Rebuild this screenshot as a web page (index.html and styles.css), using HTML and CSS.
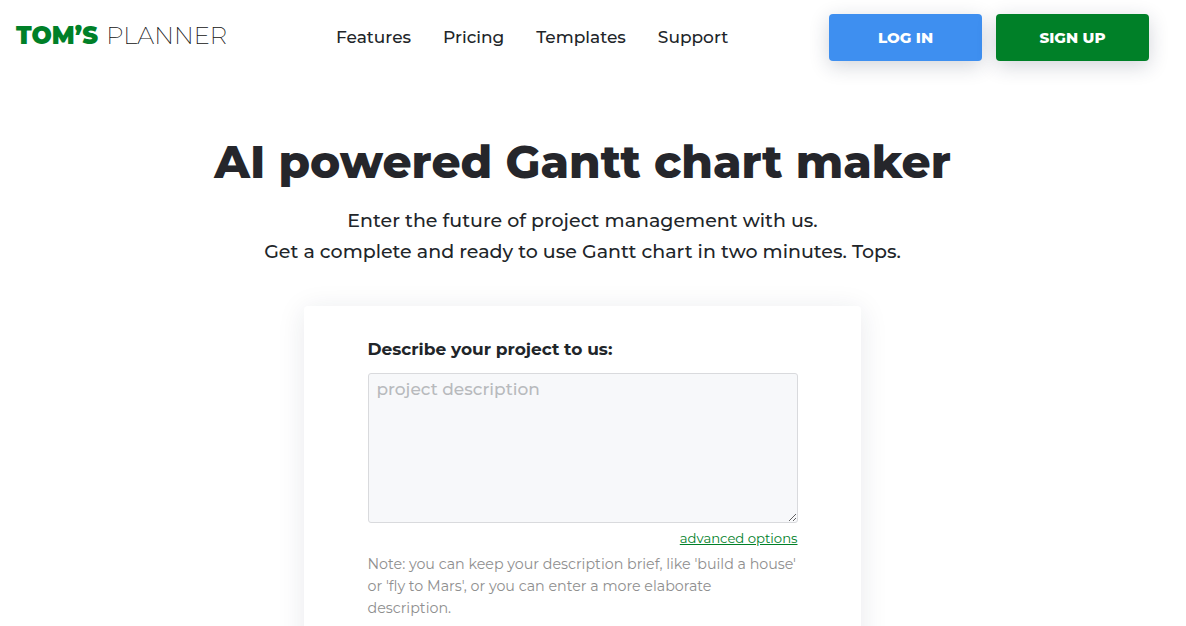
FILE: index.html
```html
<!DOCTYPE html>
<html lang="en">
  <head>
    <meta charset="UTF-8" />
    <title>Tom's Planner</title>
    <link rel="stylesheet" href="styles.css">
  </head>
  <body>
    <header class="topbar">
      <a class="logo" href="#"><b>TOM’S</b> <span>PLANNER</span></a>
      <nav class="menu">
        <a href="#">Features</a>
        <a href="#">Pricing</a>
        <a href="#">Templates</a>
        <a href="#">Support</a>
      </nav>
      <div class="actions">
        <a class="btn btn-login" href="#">LOG IN</a>
        <a class="btn btn-signup" href="#">SIGN UP</a>
      </div>
    </header>

    <main class="hero">
      <h1>AI powered Gantt chart maker</h1>
      <p class="intro">Enter the future of project management with us.<br>Get a complete and ready to use Gantt chart in two minutes. Tops.</p>

      <section class="card">
        <label class="card-label" for="description">Describe your project to us:</label>
        <textarea id="description" placeholder="project description"></textarea>
        <div class="advanced"><a href="#">advanced options</a></div>
        <p class="note">Note: you can keep your description brief, like 'build a house' or 'fly to Mars', or you can enter a more elaborate<br>description.</p>
      </section>
    </main>
  </body>
</html>
```

FILE: styles.css
```css
/* General Styles */
html,
body {
  height: 626px;
  overflow: hidden;
}

body {
  margin: 0;
  background: #fff;
  color: #212529;
  font-family: Montserrat, "Inter", "Open Sans", sans-serif;
}

a {
  text-decoration: none;
  color: inherit;
}

/* Top Bar */
.topbar {
  display: flex;
  align-items: center;
  height: 47px;
  padding: 14px 37px 0 16px;
}

.logo {
  width: 320px;
  margin-top: -4px;
  font-size: 24px;
  color: #111;
  white-space: nowrap;
}

.logo b {
  color: #008028;
  font-weight: 900;
}

.logo span {
  margin-left: 2px;
  font-size: 24.2px;
  font-weight: 200;
}

.menu {
  display: flex;
  gap: 32px;
  margin-top: -2px;
  font-size: 17px;
  font-weight: 500;
}

.actions {
  display: flex;
  gap: 14px;
  margin-left: auto;
}

.btn {
  display: flex;
  align-items: center;
  justify-content: center;
  width: 153px;
  height: 47px;
  border-radius: 4px;
  color: #fff;
  font-size: 15.1px;
  font-weight: 800;
  box-shadow: 0 5px 20px rgba(30, 40, 70, 0.2);
}

.btn-login {
  background: #3e8ff0;
}

.btn-signup {
  background: #008028;
}

/* Hero */
.hero {
  display: flex;
  flex-direction: column;
  align-items: center;
  width: 1165px;
}

h1 {
  margin: 73px 0 0;
  font-size: 45.45px;
  line-height: 56px;
  font-weight: 800;
  color: #25262b;
}

.intro {
  margin: 15px 0 0;
  font-size: 19px;
  line-height: 31px;
  font-weight: 500;
  text-align: center;
}

/* Card */
.card {
  width: 430px;
  height: 400px;
  margin: 39px 1px 0 0;
  padding: 32px 63px 32px 64px;
  border-radius: 4px;
  box-shadow: 0 4px 28px rgba(30, 40, 70, 0.1);
}

.card-label {
  display: block;
  font-size: 17px;
  font-weight: 700;
  line-height: 22px;
  margin-bottom: 13px;
}

textarea {
  display: block;
  width: 100%;
  height: 150px;
  box-sizing: border-box;
  padding: 4px 8px;
  background: #f7f8fa;
  border: 1px solid #d9dadd;
  border-radius: 3px;
  font: 500 17px/22px Montserrat, "Inter", "Open Sans", sans-serif;
}

textarea::placeholder {
  color: #b8babd;
}

.advanced {
  margin-top: 7px;
  text-align: right;
  font-size: 13.2px;
  line-height: 16px;
}

.advanced a {
  color: #008028;
  text-decoration: underline;
}

.note {
  margin: 7px 0 0;
  font-size: 14.25px;
  line-height: 22px;
  color: #8f8f8f;
}
```
